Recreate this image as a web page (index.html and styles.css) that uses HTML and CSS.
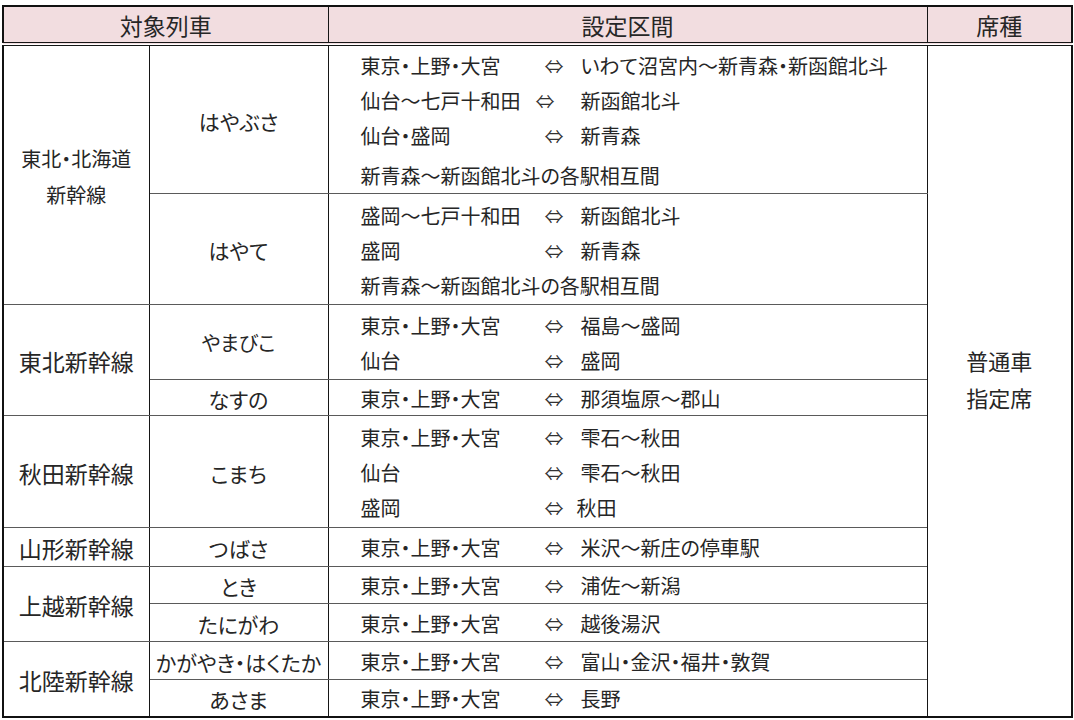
FILE: index.html
```html
<!DOCTYPE html>
<html lang="ja">
<head>
<meta charset="utf-8">
<title>設定区間</title>
<link rel="stylesheet" href="styles.css">
</head>
<body>
<table class="fare-table">
  <colgroup>
    <col class="c-line">
    <col class="c-train">
    <col class="c-section">
    <col class="c-seat">
  </colgroup>
  <thead>
    <tr class="h-head">
      <th colspan="2">対象列車</th>
      <th>設定区間</th>
      <th>席種</th>
    </tr>
  </thead>
  <tbody>
    <tr class="h-hayabusa">
      <td rowspan="2" class="line line--small"><div>東北・北海道</div><div>新幹線</div></td>
      <td class="train">はやぶさ</td>
      <td class="section">
        <div class="route"><span>東京・上野・大宮</span><span class="arr">⇔</span><span>いわて沼宮内～新青森・新函館北斗</span></div>
        <div class="route route--tight"><span>仙台～七戸十和田</span><span class="arr">⇔</span><span>新函館北斗</span></div>
        <div class="route"><span>仙台・盛岡</span><span class="arr">⇔</span><span>新青森</span></div>
        <div class="route route--last">新青森～新函館北斗の各駅相互間</div>
      </td>
      <td rowspan="10" class="seat"><div>普通車</div><div>指定席</div></td>
    </tr>
    <tr class="h-hayate">
      <td class="train">はやて</td>
      <td class="section">
        <div class="route"><span>盛岡～七戸十和田</span><span class="arr">⇔</span><span>新函館北斗</span></div>
        <div class="route"><span>盛岡</span><span class="arr">⇔</span><span>新青森</span></div>
        <div class="route">新青森～新函館北斗の各駅相互間</div>
      </td>
    </tr>
    <tr class="h-yamabiko">
      <td rowspan="2" class="line">東北新幹線</td>
      <td class="train train--small">やまびこ</td>
      <td class="section">
        <div class="route"><span>東京・上野・大宮</span><span class="arr">⇔</span><span>福島～盛岡</span></div>
        <div class="route"><span>仙台</span><span class="arr">⇔</span><span>盛岡</span></div>
      </td>
    </tr>
    <tr class="h-nasuno">
      <td class="train">なすの</td>
      <td class="section single">
        <div class="route"><span>東京・上野・大宮</span><span class="arr">⇔</span><span>那須塩原～郡山</span></div>
      </td>
    </tr>
    <tr class="h-komachi">
      <td class="line">秋田新幹線</td>
      <td class="train">こまち</td>
      <td class="section">
        <div class="route"><span>東京・上野・大宮</span><span class="arr">⇔</span><span>雫石～秋田</span></div>
        <div class="route"><span>仙台</span><span class="arr">⇔</span><span>雫石～秋田</span></div>
        <div class="route route--near"><span>盛岡</span><span class="arr">⇔</span><span>秋田</span></div>
      </td>
    </tr>
    <tr class="h-tsubasa">
      <td class="line">山形新幹線</td>
      <td class="train">つばさ</td>
      <td class="section single">
        <div class="route"><span>東京・上野・大宮</span><span class="arr">⇔</span><span>米沢～新庄の停車駅</span></div>
      </td>
    </tr>
    <tr class="h-toki">
      <td rowspan="2" class="line">上越新幹線</td>
      <td class="train">とき</td>
      <td class="section single">
        <div class="route"><span>東京・上野・大宮</span><span class="arr">⇔</span><span>浦佐～新潟</span></div>
      </td>
    </tr>
    <tr class="h-tanigawa">
      <td class="train">たにがわ</td>
      <td class="section single">
        <div class="route"><span>東京・上野・大宮</span><span class="arr">⇔</span><span>越後湯沢</span></div>
      </td>
    </tr>
    <tr class="h-kagayaki">
      <td rowspan="2" class="line">北陸新幹線</td>
      <td class="train">かがやき・はくたか</td>
      <td class="section single">
        <div class="route"><span>東京・上野・大宮</span><span class="arr">⇔</span><span>富山・金沢・福井・敦賀</span></div>
      </td>
    </tr>
    <tr class="h-asama">
      <td class="train">あさま</td>
      <td class="section single">
        <div class="route"><span>東京・上野・大宮</span><span class="arr">⇔</span><span>長野</span></div>
      </td>
    </tr>
  </tbody>
</table>
</body>
</html>
```
FILE: styles.css
```css
html, body {
  margin: 0;
  padding: 0;
  background: #ffffff;
}

body {
  font-family: "Noto Sans CJK JP", "Noto Sans", sans-serif;
  color: #262626;
  font-feature-settings: "palt";
}

.fare-table {
  margin: 5px 0 0 2px;
  width: 1069px;
  table-layout: fixed;
  border-collapse: collapse;
  border: 2px solid #111;
}

.c-line { width: 146px; }
.c-train { width: 179px; }
.c-section { width: 599px; }
.c-seat { width: 145px; }

th, td {
  padding: 2px 0 0 0;
  border-left: 1px solid #161616;
  border-right: 1px solid #161616;
  border-top: 1px solid #5a5a5a;
  border-bottom: 1px solid #5a5a5a;
  vertical-align: middle;
  text-align: center;
  font-weight: 400;
}

th {
  background: #f2dde0;
  font-size: 23px;
  line-height: 30px;
  padding-top: 0;
  border-bottom: 4px double #161616;
  border-top: 2px solid #111;
}

.h-head { height: 38px; }
.h-hayabusa { height: 148px; }
.h-hayate { height: 111px; }
.h-yamabiko { height: 75px; }
.h-nasuno { height: 36px; }
.h-komachi { height: 112px; }
.h-tsubasa { height: 39px; }
.h-toki { height: 37px; }
.h-tanigawa { height: 38px; }
.h-kagayaki { height: 38px; }
.h-asama { height: 37px; }

.line {
  font-size: 23px;
  line-height: 30px;
  padding-top: 2px;
}

.line--small {
  font-size: 20px;
  line-height: 36px;
  padding-top: 4px;
}

.train {
  font-size: 21px;
  line-height: 30px;
}

.train--small {
  font-size: 20px;
}

.section {
  text-align: left;
  padding-left: 32px;
  font-size: 20px;
}

.route {
  display: grid;
  grid-template-columns: 184px 36px auto;
  line-height: 35px;
  white-space: nowrap;
}

.route--tight {
  grid-template-columns: 175px 45px auto;
}

.route--near {
  grid-template-columns: 184px 32px auto;
}

.route--last {
  margin-top: 5px;
}

.section.single .route {
  line-height: 30px;
}

.arr {
  font-size: 19px;
  color: #333;
}

.seat {
  font-size: 22px;
  line-height: 37px;
  padding-top: 0;
  padding-bottom: 3px;
  border-bottom: 2px solid #111;
}
```
